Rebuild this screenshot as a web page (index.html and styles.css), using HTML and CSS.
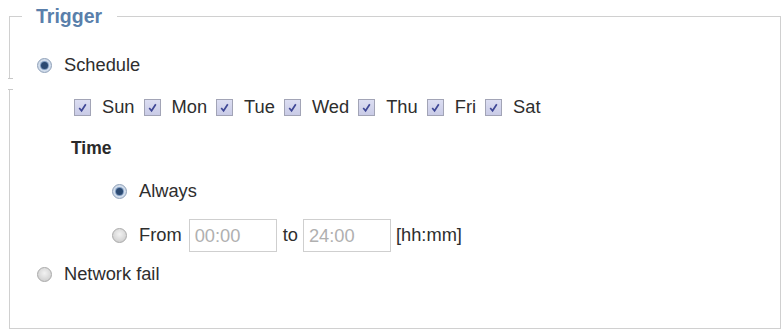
FILE: index.html
```html
<!DOCTYPE html>
<html>
<head>
<meta charset="utf-8">
<link rel="stylesheet" href="styles.css">
</head>
<body>
<fieldset class="box">
  <legend class="legend">Trigger</legend>
  <span class="break"></span>
  <div class="row row-schedule">
    <span class="radio on"></span><span class="label">Schedule</span>
  </div>
  <div class="row row-days">
    <span class="day"><span class="cb"><svg viewBox="0 0 16 16"><path d="M4.5 8.5 L7 11.5 L11.5 4.5" /></svg></span>Sun</span>
    <span class="day"><span class="cb"><svg viewBox="0 0 16 16"><path d="M4.5 8.5 L7 11.5 L11.5 4.5" /></svg></span>Mon</span>
    <span class="day"><span class="cb"><svg viewBox="0 0 16 16"><path d="M4.5 8.5 L7 11.5 L11.5 4.5" /></svg></span>Tue</span>
    <span class="day"><span class="cb"><svg viewBox="0 0 16 16"><path d="M4.5 8.5 L7 11.5 L11.5 4.5" /></svg></span>Wed</span>
    <span class="day"><span class="cb"><svg viewBox="0 0 16 16"><path d="M4.5 8.5 L7 11.5 L11.5 4.5" /></svg></span>Thu</span>
    <span class="day"><span class="cb"><svg viewBox="0 0 16 16"><path d="M4.5 8.5 L7 11.5 L11.5 4.5" /></svg></span>Fri</span>
    <span class="day"><span class="cb"><svg viewBox="0 0 16 16"><path d="M4.5 8.5 L7 11.5 L11.5 4.5" /></svg></span>Sat</span>
  </div>
  <div class="row row-time"><span class="bold">Time</span></div>
  <div class="row row-always">
    <span class="radio on"></span><span class="label">Always</span>
  </div>
  <div class="row row-from">
    <span class="radio"></span><span class="label">From</span>
    <span class="input">00:00</span>
    <span class="to">to</span>
    <span class="input input2">24:00</span>
    <span class="unit">[hh:mm]</span>
  </div>
  <div class="row row-net">
    <span class="radio"></span><span class="label">Network fail</span>
  </div>
</fieldset>
</body>
</html>
```
FILE: styles.css
```css
html, body {
  margin: 0;
  padding: 0;
  background: #ffffff;
}
body {
  width: 782px;
  height: 329px;
  overflow: hidden;
  font-family: "Liberation Sans", Arial, sans-serif;
  font-size: 18.3px;
  color: #2e2e2e;
  padding-top: 6px;
  box-sizing: border-box;
}
.box {
  position: relative;
  box-sizing: border-box;
  margin: 0 1px 0 9px;
  height: 323px;
  border: 1px solid #d0d0d0;
  padding: 0 0 0 12px;
  min-width: 0;
}
.legend {
  padding: 0 15px 0 14px;
  font-weight: bold;
  font-size: 19.5px;
  line-height: 20px;
  color: #5a7fab;
}
.break {
  position: absolute;
  left: -2px;
  top: 52px;
  width: 5px;
  height: 10px;
  background: #ffffff;
  border-top: 1px solid #c8c8c8;
  border-bottom: 1px solid #c8c8c8;
}
.row {
  display: flex;
  align-items: center;
  height: 28px;
  white-space: nowrap;
}
.row-schedule { margin: 25px 0 0 15px; }
.row-days { margin: 14px 0 0 52px; }
.row-time { margin: 13px 0 0 49px; }
.row-always { margin: 15px 0 0 90px; }
.row-from { margin: 13px 0 0 90px; height: 34px; }
.row-net { margin: 8px 0 0 15px; }

.label { margin-left: 12px; }
.bold { font-weight: bold; color: #2a2a2a; font-size: 17.5px; }

.radio {
  box-sizing: border-box;
  width: 15px;
  height: 15px;
  border-radius: 50%;
  border: 1px solid #a9a9a9;
  background: radial-gradient(circle at 50% 40%, #f2f2f2 0%, #d8d8d8 60%, #c4c4c4 100%);
  display: flex;
  align-items: center;
  justify-content: center;
  flex: none;
}
.radio.on {
  border-color: #8fa0b8;
  background: radial-gradient(circle, #e4ecf6 0%, #c4d2e4 100%);
}
.radio.on::after {
  content: "";
  width: 7px;
  height: 7px;
  border-radius: 50%;
  background: #2c4a72;
  box-shadow: 0 0 0 1px #7f9bc0;
}

.day {
  display: flex;
  align-items: center;
  margin-right: 9px;
}
.cb {
  box-sizing: border-box;
  width: 17px;
  height: 17px;
  border: 1px solid #a2a4b6;
  background: linear-gradient(#dcdef2, #c9cbe6);
  margin-right: 11px;
  display: flex;
  flex: none;
}
.cb svg {
  width: 15px;
  height: 15px;
}
.cb path {
  fill: none;
  stroke: #3e4796;
  stroke-width: 1.8;
}

.input {
  box-sizing: border-box;
  width: 88px;
  height: 33px;
  border: 1px solid #cfcfcf;
  color: #b0b0b0;
  padding: 6px 0 0 5px;
  margin-left: 7px;
  line-height: 20px;
}
.to { margin-left: 6px; }
.input2 { margin-left: 5px; }
.unit { margin-left: 5px; }
```
